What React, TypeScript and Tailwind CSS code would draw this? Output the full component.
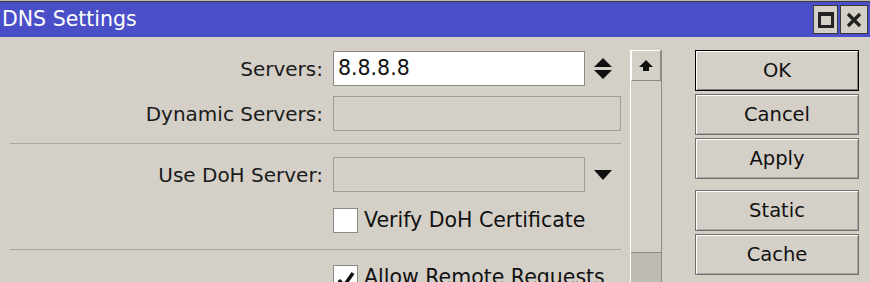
import type { ReactNode } from 'react';

const font = { fontFamily: '"DejaVu Sans", Verdana, sans-serif' };

function Label({ children }: { children: ReactNode }) {
  return (
    <span className="w-[325px] shrink-0 pr-[2px] text-right text-[20px] leading-none text-[#1a1a1a]">
      {children}
    </span>
  );
}

function DialogButton({ label, primary }: { label: string; primary?: boolean }) {
  return (
    <button
      className={
        'flex h-[41px] w-[164px] shrink-0 items-center justify-center bg-[#d4d0c8] text-[19.5px] leading-none text-[#111] ' +
        (primary
          ? 'border border-black shadow-[inset_1px_1px_0_#ffffff,inset_-1px_-1px_0_#808080]'
          : 'border border-[#6e6e6e] shadow-[inset_1px_1px_0_#ffffff,inset_-1px_-1px_0_#a8a8a8]')
      }
    >
      {label}
    </button>
  );
}

function Separator() {
  return <div className="ml-[10px] h-[2px] w-[611px] border-t border-[#aaa69e] border-b-white" />;
}

export default function App() {
  return (
    <div className="flex h-[282px] w-[870px] flex-col overflow-hidden bg-[#d4d0c8]" style={font}>
      <div className="h-[1px] shrink-0 bg-[#bdbab2]" />
      <div className="h-[1px] shrink-0 bg-[#3a3a3a]" />
      <header className="flex h-[35px] shrink-0 items-center justify-between bg-[#4a4fc8] pl-[2px] pr-[2px]">
        <h1 className="text-[20.5px] leading-none text-white">DNS Settings</h1>
        <div className="flex gap-[2px]">
          <span className="flex h-[29px] w-[25px] items-center justify-center border border-[#3a3a3a] bg-[#d4d0c8]">
            <span className="h-[16px] w-[16px] border-[3px] border-[#222] border-t-[4px]" />
          </span>
          <span className="flex h-[29px] w-[28px] items-center justify-center border border-[#3a3a3a] bg-[#d4d0c8]">
            <svg width="16" height="16" viewBox="0 0 16 16">
              <path d="M2 2 L14 14 M14 2 L2 14" stroke="#222" strokeWidth="3.2" />
            </svg>
          </span>
        </div>
      </header>

      <div className="flex min-h-0 flex-1">
        <div className="flex w-[630px] shrink-0 flex-col pt-[14px]">
          <div className="flex h-[35px] shrink-0 items-center">
            <Label>Servers:</Label>
            <div className="ml-[8px] flex h-[35px] w-[252px] items-center border border-[#8c8a85] bg-white px-[4px] text-[20.5px] text-[#111]">
              8.8.8.8
            </div>
            <svg className="ml-[8px]" width="20" height="24" viewBox="0 0 20 24">
              <path d="M10 1 L19 10 L1 10 Z M1 13 L19 13 L10 22 Z" fill="#111" />
            </svg>
          </div>
          <div className="mt-[10px] flex h-[35px] shrink-0 items-center">
            <Label>Dynamic Servers:</Label>
            <div className="ml-[8px] h-[35px] w-[288px] border border-[#a09d97] bg-[#d4d0c8]" />
          </div>
          <div className="mt-[12px] mb-[12px] shrink-0">
            <Separator />
          </div>
          <div className="flex h-[35px] shrink-0 items-center">
            <Label>Use DoH Server:</Label>
            <div className="ml-[8px] h-[35px] w-[252px] border border-[#a09d97] bg-[#d4d0c8]" />
            <svg className="ml-[8px]" width="20" height="12" viewBox="0 0 20 12">
              <path d="M1 1 L19 1 L10 11 Z" fill="#111" />
            </svg>
          </div>
          <div className="mt-[16px] flex h-[24px] shrink-0 items-center pl-[333px]">
            <span className="h-[25px] w-[25px] border border-[#8c8a85] bg-white" />
            <span className="ml-[6px] text-[20.5px] leading-none text-[#111]">Verify DoH Certificate</span>
          </div>
          <div className="mt-[17px] mb-[14px] shrink-0">
            <Separator />
          </div>
          <div className="flex h-[24px] shrink-0 items-center pl-[333px]">
            <span className="flex h-[25px] w-[25px] items-end justify-center border border-[#8c8a85] bg-white">
              <svg width="20" height="18" viewBox="0 0 20 18">
                <path d="M3 9 L8 15 L17 2" stroke="#111" strokeWidth="3.5" fill="none" />
              </svg>
            </span>
            <span className="ml-[6px] text-[20.5px] leading-none text-[#111]">Allow Remote Requests</span>
          </div>
        </div>

        <div className="mt-[13px] flex w-[32px] shrink-0 flex-col border-x border-l-white border-r-[#8c8a85]">
          <div className="flex h-[31px] shrink-0 items-center justify-center border border-[#8c8a85] border-l-white border-t-white bg-[#d4d0c8]">
            <svg width="16" height="14" viewBox="0 0 16 14">
              <path d="M8 1 L15 8 L11 8 L11 12 L5 12 L5 8 L1 8 Z" fill="#111" />
            </svg>
          </div>
          <div className="h-[171px] shrink-0 bg-[#d4d0c8]" />
          <div className="flex-1 border-t border-[#8c8a85] bg-[#bdbab3]" />
        </div>

        <div className="ml-[33px] flex flex-col pt-[13px]">
          <DialogButton label="OK" primary />
          <div className="mt-[3px] flex flex-col gap-[3px]">
            <DialogButton label="Cancel" />
            <DialogButton label="Apply" />
          </div>
          <div className="mt-[11px] flex flex-col gap-[3px]">
            <DialogButton label="Static" />
            <DialogButton label="Cache" />
          </div>
        </div>
      </div>
    </div>
  );
}
